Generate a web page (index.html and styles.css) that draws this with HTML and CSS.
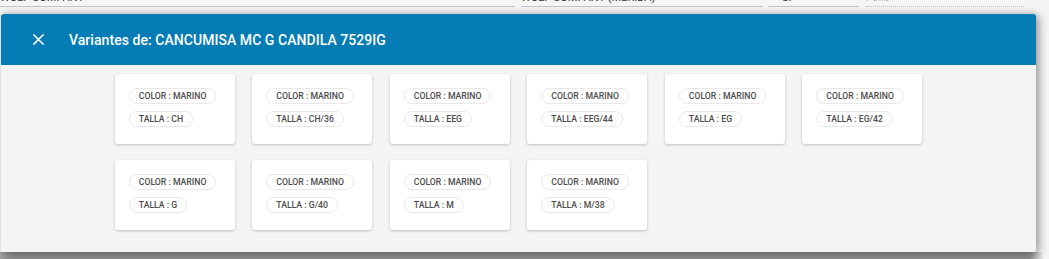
FILE: index.html
```html
<!DOCTYPE html>
<html lang="es">
<head>
  <meta charset="UTF-8" />
  <meta name="viewport" content="width=device-width, initial-scale=1.0" />
  <title>Variantes</title>
  <link rel="stylesheet" href="styles.css">
</head>
<body>
  <div class="form-row">
    <div class="field f-empresa"><span>WOLF COMPANY</span></div>
    <div class="field f-sucursal"><span>WOLF COMPANY (MERIDA)</span></div>
    <div class="field f-si"><span>SI</span></div>
    <div class="field f-folio dotted"><span class="muted">Folio</span></div>
  </div>

  <div class="dialog">
    <div class="dialog-header">
      <button class="close-btn" aria-label="Cerrar">
        <svg width="11" height="11" viewBox="0 0 11 11">
          <path d="M1 1 L10 10 M10 1 L1 10" stroke="#fff" stroke-width="1.6" stroke-linecap="square" fill="none"/>
        </svg>
      </button>
      <div class="dialog-title">Variantes de: CANCUMISA MC G CANDILA 7529IG</div>
    </div>

    <div class="dialog-body">
      <div class="variants">
        <div class="card"><span class="chip">COLOR : MARINO</span><span class="chip">TALLA : CH</span></div>
        <div class="card"><span class="chip">COLOR : MARINO</span><span class="chip">TALLA : CH/36</span></div>
        <div class="card"><span class="chip">COLOR : MARINO</span><span class="chip">TALLA : EEG</span></div>
        <div class="card"><span class="chip">COLOR : MARINO</span><span class="chip">TALLA : EEG/44</span></div>
        <div class="card"><span class="chip">COLOR : MARINO</span><span class="chip">TALLA : EG</span></div>
        <div class="card"><span class="chip">COLOR : MARINO</span><span class="chip">TALLA : EG/42</span></div>
        <div class="card"><span class="chip">COLOR : MARINO</span><span class="chip">TALLA : G</span></div>
        <div class="card"><span class="chip">COLOR : MARINO</span><span class="chip">TALLA : G/40</span></div>
        <div class="card"><span class="chip">COLOR : MARINO</span><span class="chip">TALLA : M</span></div>
        <div class="card"><span class="chip">COLOR : MARINO</span><span class="chip">TALLA : M/38</span></div>
      </div>
    </div>
  </div>
  <div class="shade"></div>
</body>
</html>
```

FILE: styles.css
```css
body {
  font-family: Roboto, "Liberation Sans", Arial, sans-serif;
  margin: 0;
  padding: 0;
  background-color: #f5f5f5;
  color: #333;
  overflow: hidden;
}
.form-row {
  display: flex;
  height: 7px;
  overflow: hidden;
}
.field {
  height: 6px;
  border-bottom: 1px solid #c4c4c4;
  overflow: hidden;
  font-size: 11px;
  line-height: 11px;
}
.field span {
  display: block;
  margin-top: -8px;
  color: #333;
}
.field .muted {
  color: #bbb;
}
.f-empresa {
  width: 515px;
  margin-right: 6px;
}
.f-sucursal {
  width: 242px;
  margin-right: 5px;
}
.f-si {
  width: 77px;
  padding-left: 14px;
  margin-right: 7px;
}
.f-folio {
  width: 158px;
}
.dotted {
  border-bottom: 1px dotted #bdbdbd;
}
.dialog {
  position: relative;
  z-index: 1;
  width: 1035px;
  margin: 7px 0 0 1px;
  border-radius: 3px;
  overflow: hidden;
  box-shadow: 4px 2px 8px rgba(0, 0, 0, 0.3), 0 -2px 6px rgba(0, 0, 0, 0.12);
}
.dialog-header {
  background-color: #057cb4;
  height: 51px;
  display: flex;
  align-items: center;
  padding-left: 32px;
  color: white;
}
.close-btn {
  background: none;
  border: none;
  padding: 0;
  width: 11px;
  height: 11px;
  display: flex;
  margin-right: 25px;
}
.dialog-title {
  font-size: 14px;
  font-weight: 500;
  letter-spacing: 0.05px;
}
.dialog-body {
  background-color: #f4f4f4;
  height: 187px;
  padding-top: 9px;
  box-sizing: border-box;
}
.variants {
  display: grid;
  grid-template-columns: repeat(6, 120px);
  column-gap: 17.5px;
  row-gap: 16px;
  justify-content: center;
}
.card {
  background-color: white;
  border-radius: 3px;
  box-shadow: 0 1px 3px rgba(0, 0, 0, 0.22);
  height: 70px;
  box-sizing: border-box;
  padding: 14px 14px 0;
  display: flex;
  flex-direction: column;
  align-items: flex-start;
  gap: 7px;
}
.chip {
  height: 16px;
  box-sizing: border-box;
  border: 1px solid #e8e8e8;
  border-radius: 8px;
  padding: 0 9px;
  font-size: 8.7px;
  font-weight: 500;
  line-height: 14px;
  color: #4c4c4c;
  white-space: nowrap;
}
.shade {
  height: 12px;
  width: 1044px;
  background: linear-gradient(90deg, #a0a0a0 0, #8e8e8e 10px, #8e8e8e 1030px, rgba(160, 160, 160, 0) 100%);
}
```
